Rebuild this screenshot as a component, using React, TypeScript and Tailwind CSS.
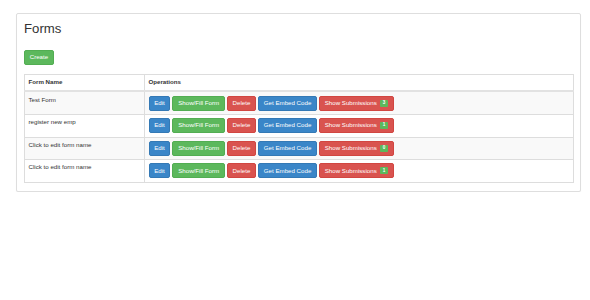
import React from "react";

const rows = [
  { name: "Test Form", count: 3 },
  { name: "register new emp", count: 1 },
  { name: "Click to edit form name", count: 0 },
  { name: "Click to edit form name", count: 1 },
];

function Btn({ color, children }: { color: "blue" | "green" | "red"; children: React.ReactNode }) {
  const cls =
    color === "blue"
      ? "bg-[#3a86c8] border-[#3479b5]"
      : color === "green"
      ? "bg-[#5cb85c] border-[#52ad52]"
      : "bg-[#d9534f] border-[#d14641]";
  return (
    <span
      className={`flex items-center h-[15px] px-[4.7px] border border-solid rounded-[2px] text-white text-[6.16px] leading-[8.8px] whitespace-nowrap ${cls}`}
    >
      {children}
    </span>
  );
}

export default function App() {
  return (
    <div className="font-['Liberation_Sans',Arial,sans-serif] text-[#333] text-[6.16px] leading-[8.8px] pt-[13px] pl-[16px]">
      <div className="w-[565px] border border-[#dedede] rounded-[2px] shadow-[0_1px_1px_rgba(0,0,0,0.05)] bg-white px-[7px] pt-[8px] pb-[8px]">
        <h2 className="text-[13.2px] leading-[14.5px] font-medium m-0">Forms</h2>
        <div className="mt-[13.5px] flex">
          <Btn color="green">Create</Btn>
        </div>
        <table className="mt-[9px] w-[550px] border-collapse border border-[#ddd] text-[6.16px] leading-[8.8px]">
          <thead>
            <tr>
              <th className="w-[120px] text-left font-bold px-[3.5px] py-[3.3px] border border-[#ddd] border-b-2 border-b-[#e2e2e2]">
                Form Name
              </th>
              <th className="text-left font-bold px-[3.5px] py-[3.3px] border border-[#ddd] border-b-2 border-b-[#e2e2e2]">
                Operations
              </th>
            </tr>
          </thead>
          <tbody>
            {rows.map((r, i) => (
              <tr key={i} className={i % 2 === 0 ? "bg-[#f9f9f9]" : "bg-white"}>
                <td className="align-top px-[3.5px] py-[3.3px] border border-[#ddd]">{r.name}</td>
                <td className="align-top px-[3.5px] py-[3.3px] border border-[#ddd]">
                  <div className="flex gap-[2px]">
                    <Btn color="blue">Edit</Btn>
                    <Btn color="green">Show/Fill Form</Btn>
                    <Btn color="red">Delete</Btn>
                    <Btn color="blue">Get Embed Code</Btn>
                    <Btn color="red">
                      Show Submissions
                      <span className="ml-[3.5px] flex items-center justify-center bg-[#5cb85c] text-white font-bold text-[4.6px] leading-none px-[2.6px] h-[7px] rounded-[1px]">
                        {r.count}
                      </span>
                    </Btn>
                  </div>
                </td>
              </tr>
            ))}
          </tbody>
        </table>
      </div>
    </div>
  );
}
